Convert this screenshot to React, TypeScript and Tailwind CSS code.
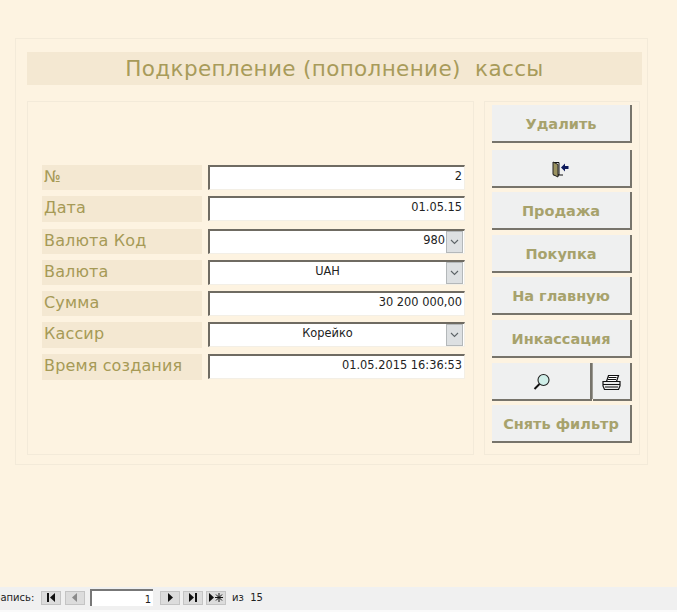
import React from "react";

const labelFont = "font-['DejaVu_Sans',sans-serif]";

function Chevron() {
  return (
    <div className="w-[17px] h-[22px] bg-[#dde0e2] border border-[#b4b8ba] flex items-center justify-center shrink-0">
      <svg width="9" height="6" viewBox="0 0 9 6" fill="none" stroke="#5d6468" strokeWidth="1.1">
        <path d="M1 1l3.5 3.5L8 1" />
      </svg>
    </div>
  );
}

function Row({ label, value, align, combo, top, tall }: { label: string; value: string; align: "right" | "center"; combo?: boolean; top: string; tall?: boolean }) {
  return (
    <div className={`flex gap-[6px] ${top}`}>
      <div className={`w-[160px] ${tall ? "h-[26px]" : "h-[25px]"} bg-[#f4e8d2] pl-[2px] flex items-center ${labelFont} text-[16px] leading-none text-[#a69a56] tracking-[0.15px] pb-[2px]`}>
        {label}
      </div>
      <div className="w-[257px] h-[25px] bg-white border-t-2 border-l-2 border-t-[#6f6b62] border-l-[#6f6b62] border-b border-r border-b-[#f3efe6] border-r-[#f3efe6] flex items-start">
        <div className={`flex-1 min-w-0 ${align === "right" ? (combo ? "text-right" : "text-right pr-[2px]") : "text-center"} font-['DejaVu_Sans',sans-serif] text-[11.4px] leading-[16px] pt-[1px] text-[#222222]`}>
          {value}
        </div>
        {combo && <div className="ml-[1px] mr-[1px]"><Chevron /></div>}
      </div>
    </div>
  );
}

function Btn({ children, className = "" }: { children?: React.ReactNode; className?: string }) {
  return (
    <div className={`h-[38px] pt-[2px] bg-[#eff0f0] border-r-2 border-b-2 border-r-[#77746b] border-b-[#77746b] flex items-center justify-center font-['DejaVu_Sans',sans-serif] font-bold text-[14.5px] leading-none text-[#a7a26c] ${className}`}>
      {children}
    </div>
  );
}

function Door() {
  return (
    <svg width="18" height="17" viewBox="0 0 18 17">
      <path d="M1.5 1.5h5.5v12.5H1.5z" fill="#fff" stroke="#111" strokeWidth="1" />
      <path d="M1 1l5 2.5V16L1 13.5z" fill="#9a9260" stroke="#222" strokeWidth="1" />
      <path d="M6 14h5" stroke="#111" strokeWidth="1" />
      <path d="M9 6.5L13 2.5v2.5h3.5v3H13v2.5z" fill="#0d1a5c" />
    </svg>
  );
}

function Search() {
  return (
    <svg width="18" height="18" viewBox="0 0 18 18">
      <circle cx="10.5" cy="7" r="5.5" fill="#cfeee8" stroke="#222" strokeWidth="1.1" />
      <path d="M6.5 11L1.5 16" stroke="#111" strokeWidth="2" />
    </svg>
  );
}

function Printer() {
  return (
    <svg width="19" height="17" viewBox="0 0 19 17" fill="none" stroke="#111" strokeWidth="1.2">
      <path d="M4.5 7.5L6.5 1.5h10l-2 6" fill="#fff" />
      <path d="M6.5 3.5h8M6 5.5h8" />
      <path d="M1 7.5h17v4.5l-1.5 3.5H2.5L1 12z" fill="#ececec" />
      <path d="M1 10.5h17M3 13h13" />
    </svg>
  );
}

function Nav({ children, className = "" }: { children: React.ReactNode; className?: string }) {
  return (
    <div className={`w-[20px] h-[14px] bg-[#dcdcdc] border border-[#c4c4c4] flex items-center justify-center ${className}`}>
      {children}
    </div>
  );
}

export default function App() {
  return (
    <div className="w-[677px] h-[612px] bg-[#fdf3e1] flex flex-col overflow-hidden">
      <div className="flex-1 pt-[38px] pl-[15px]">
        <div className="w-[633px] h-[427px] border border-[#f3ead9] pt-[13px] pl-[11px]">
          <div className="w-[615px] h-[33px] bg-[#f4e8d2] flex items-center justify-center font-['DejaVu_Sans',sans-serif] text-[21.5px] leading-none tracking-[0.35px] text-[#a89b5a] whitespace-pre">
            Подкрепление (пополнение)  кассы
          </div>
          <div className="flex mt-[16px] items-start">
            <div className="w-[447px] h-[354px] border border-[#f3ead9] pt-[63px] pl-[14px]">
              <Row label="№" value="2" align="right" top="" />
              <Row label="Дата" value="01.05.15" align="right" top="mt-[6px]" tall />
              <Row label="Валюта Код" value="980" align="right" combo top="mt-[7px]" />
              <Row label="Валюта" value="UAH" align="center" combo top="mt-[6px]" />
              <Row label="Сумма" value="30 200 000,00" align="right" top="mt-[6px]" />
              <Row label="Кассир" value="Корейко" align="center" combo top="mt-[6px]" tall />
              <Row label="Время создания" value="01.05.2015 16:36:53" align="right" top="mt-[6px]" tall />
            </div>
            <div className="w-[156px] h-[354px] ml-[10px] border border-[#f3ead9] pt-[3px] pl-[7px]">
              <div className="w-[140px] flex flex-col">
                <Btn>Удалить</Btn>
                <Btn className="mt-[7px]"><Door /></Btn>
                <Btn className="mt-[4px]">Продажа</Btn>
                <Btn className="mt-[5px]">Покупка</Btn>
                <Btn className="mt-[4px]">На главную</Btn>
                <Btn className="mt-[5px]">Инкассация</Btn>
                <div className="flex h-[38px] mt-[5px]">
                  <Btn className="w-[100px] border-r-0 pl-[2px]"><Search /></Btn>
                  <div className="w-[1px] bg-[#9c9a92] h-[36px]" />
                  <Btn className="flex-1"><Printer /></Btn>
                </div>
                <Btn className="mt-[4px]">Снять фильтр</Btn>
              </div>
            </div>
          </div>
        </div>
      </div>
      <div className="h-[23px] pb-[2px] bg-[#f0f0f0] flex items-center text-[10px] font-['DejaVu_Sans',sans-serif] text-[#222] whitespace-pre">
        <span className="-ml-[6px] w-[47px]">Запись:</span>
        <Nav><svg width="10" height="9" viewBox="0 0 10 9"><path d="M1 0h2v9H1zM9 0v9L4 4.5z" fill="#111" /></svg></Nav>
        <Nav className="ml-[4px] bg-[#c9c9c9]"><svg width="8" height="9" viewBox="0 0 8 9"><path d="M6 0v9L1 4.5z" fill="#8a8a8a" /></svg></Nav>
        <div className="ml-[5px] w-[63px] h-[17px] bg-white border-t-2 border-l-2 border-t-[#777] border-l-[#777] text-right pr-[2px] leading-[17px]">1</div>
        <Nav className="ml-[7px]"><svg width="8" height="9" viewBox="0 0 8 9"><path d="M2 0v9l5-4.5z" fill="#111" /></svg></Nav>
        <Nav className="ml-[3px]"><svg width="10" height="9" viewBox="0 0 10 9"><path d="M1 0v9l5-4.5zM7 0h2v9H7z" fill="#111" /></svg></Nav>
        <Nav className="ml-[3px]"><svg width="16" height="9" viewBox="0 0 16 9"><path d="M1 0v9l5-4.5z" fill="#111" /><path d="M11 0v9M7 4.5h8M8 1.5l6 6M14 1.5l-6 6" stroke="#111" strokeWidth="1" /></svg></Nav>
        <span className="ml-[6px]">из  15</span>
      </div>
      <div className="h-[2px] bg-[#fafafa]" />
    </div>
  );
}
